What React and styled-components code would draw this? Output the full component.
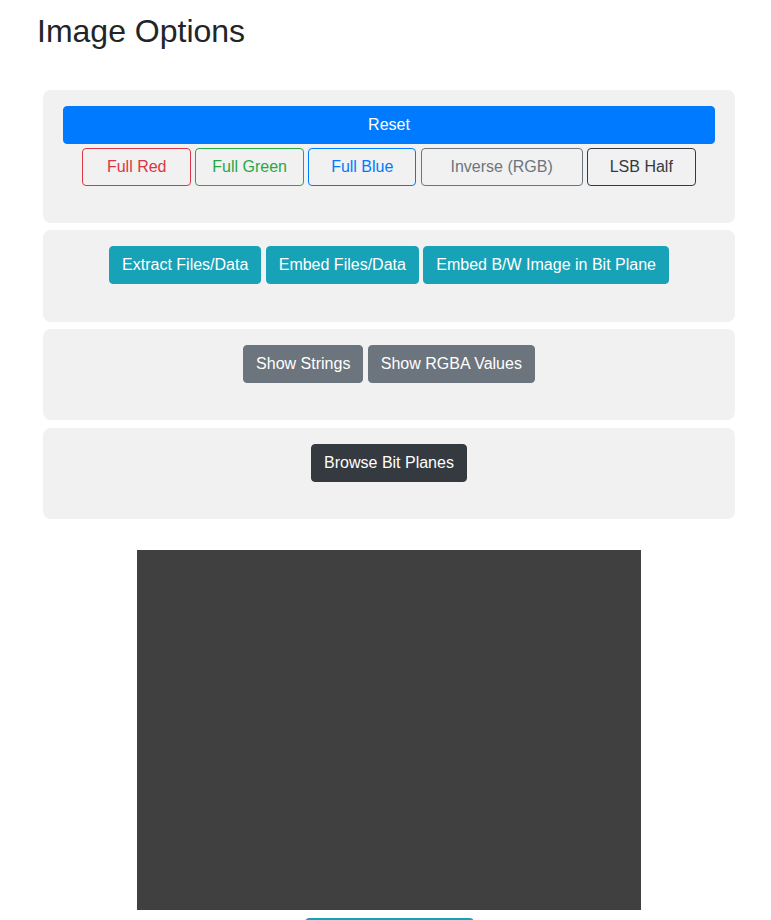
import React from "react";
import styled, { createGlobalStyle, css } from "styled-components";

const GlobalStyle = createGlobalStyle`
  body {
    margin: 0;
    background: #fff;
    color: #212529;
    font-family: "Liberation Sans", Arial, sans-serif;
    font-size: 16px;
  }
`;

const colors = {
  primary: "#007bff",
  danger: "#dc3545",
  success: "#28a745",
  info: "#17a2b8",
  secondary: "#6c757d",
  dark: "#343a40",
};

const Page = styled.div`
  padding-top: 12px;
`;

const Title = styled.h2`
  margin: 0 0 0 37px;
  font-size: 32px;
  line-height: 1.2;
  font-weight: 400;
  color: #212529;
`;

const Options = styled.div`
  margin: 39.6px 0 0 43px;
  width: 692px;
  display: flex;
  flex-direction: column;
  gap: 7.3px;
`;

const Panel = styled.div`
  background: #f1f1f1;
  border-radius: 8px;
  padding: 16px 20px ${(p) => p.$bottom || 37.3}px;
`;

const Row = styled.div`
  display: flex;
  justify-content: center;
  gap: ${(p) => p.$gap || 4.4}px;
  margin-top: ${(p) => p.$top || 0}px;
`;

const Button = styled.button`
  box-sizing: border-box;
  height: 38px;
  padding: 6px 12px;
  font-family: inherit;
  font-size: 16px;
  line-height: 1.5;
  border-radius: 4px;
  border: 1px solid ${(p) => colors[p.$variant]};
  cursor: pointer;
  white-space: nowrap;
  ${(p) =>
    p.$outline
      ? css`
          background: transparent;
          color: ${colors[p.$variant]};
        `
      : css`
          background: ${colors[p.$variant]};
          color: #fff;
        `}
  ${(p) => p.$width && css`width: ${p.$width}px;`}
  ${(p) => p.$block && css`width: 100%; display: block;`}
`;

const Preview = styled.div`
  display: flex;
  flex-direction: column;
  align-items: center;
  gap: 8px;
  margin: 31.3px 0 0 43px;
  width: 692px;
`;

const Canvas = styled.div`
  width: 504px;
  height: 360px;
  background: #404040;
`;

const colorButtons = [
  { label: "Full Red", variant: "danger", width: 108.5 },
  { label: "Full Green", variant: "success", width: 108.5 },
  { label: "Full Blue", variant: "primary", width: 108 },
  { label: "Inverse (RGB)", variant: "secondary", width: 162 },
  { label: "LSB Half", variant: "dark", width: 108.5 },
];

export default function App() {
  return (
    <Page>
      <GlobalStyle />
      <Title>Image Options</Title>
      <Options>
        <Panel $bottom={36.7}>
          <Button $variant="primary" $block>
            Reset
          </Button>
          <Row $top={4}>
            {colorButtons.map((b) => (
              <Button key={b.label} $outline $variant={b.variant} $width={b.width}>
                {b.label}
              </Button>
            ))}
          </Row>
        </Panel>
        <Panel $bottom={37.7}>
          <Row>
            <Button $variant="info">Extract Files/Data</Button>
            <Button $variant="info">Embed Files/Data</Button>
            <Button $variant="info">Embed B/W Image in Bit Plane</Button>
          </Row>
        </Panel>
        <Panel>
          <Row>
            <Button $variant="secondary">Show Strings</Button>
            <Button $variant="secondary">Show RGBA Values</Button>
          </Row>
        </Panel>
        <Panel>
          <Row>
            <Button $variant="dark">Browse Bit Planes</Button>
          </Row>
        </Panel>
      </Options>
      <Preview>
        <Canvas />
        <Button $variant="info" $width={169}>
          Download Image
        </Button>
      </Preview>
    </Page>
  );
}
